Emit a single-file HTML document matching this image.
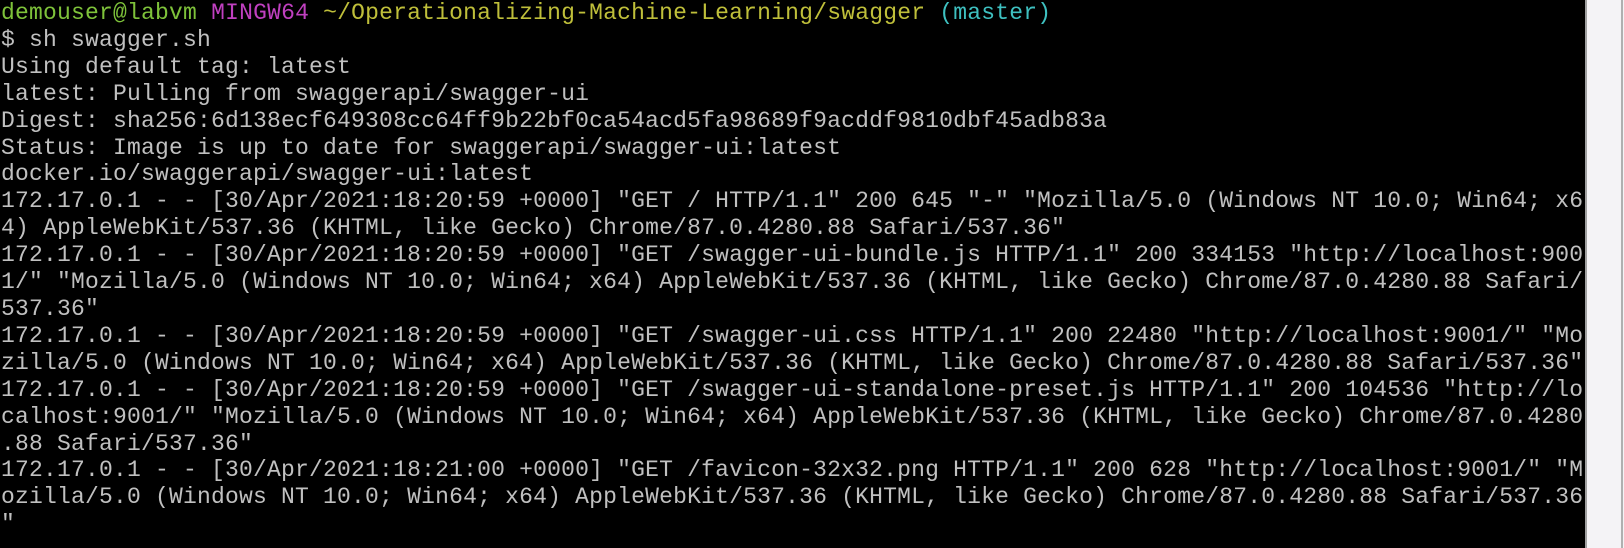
<!DOCTYPE html>
<html><head><meta charset="utf-8"><style>
html,body{margin:0;padding:0;width:1624px;height:548px;overflow:hidden;background:#f4f3f6}
#t{position:absolute;left:0;top:0;width:1585px;height:548px;background:#000}
#sb{position:absolute;left:1585px;top:0;width:2px;height:548px;background:#a0a0a0}
#sb2{position:absolute;left:1621px;top:0;width:2px;height:548px;background:#b0b0b0}
pre{margin:0;position:absolute;left:1px;top:0px;font-family:"Liberation Mono",monospace;font-size:23px;letter-spacing:0.2px;line-height:26.9px;color:#c0c0c0;white-space:pre}
.g{color:#7ec23a}.m{color:#c040c0}.y{color:#bfbf3a}.c{color:#3ec0c0}
</style></head><body>
<div id="t"></div><div id="sb"></div><div id="sb2"></div>
<pre><span class="g">demouser@labvm</span> <span class="m">MINGW64</span> <span class="y">~/Operationalizing-Machine-Learning/swagger</span> <span class="c">(master)</span>
$ sh swagger.sh
Using default tag: latest
latest: Pulling from swaggerapi/swagger-ui
Digest: sha256:6d138ecf649308cc64ff9b22bf0ca54acd5fa98689f9acddf9810dbf45adb83a
Status: Image is up to date for swaggerapi/swagger-ui:latest
docker.io/swaggerapi/swagger-ui:latest
172.17.0.1 - - [30/Apr/2021:18:20:59 +0000] "GET / HTTP/1.1" 200 645 "-" "Mozilla/5.0 (Windows NT 10.0; Win64; x6
4) AppleWebKit/537.36 (KHTML, like Gecko) Chrome/87.0.4280.88 Safari/537.36"
172.17.0.1 - - [30/Apr/2021:18:20:59 +0000] "GET /swagger-ui-bundle.js HTTP/1.1" 200 334153 "http://localhost:900
1/" "Mozilla/5.0 (Windows NT 10.0; Win64; x64) AppleWebKit/537.36 (KHTML, like Gecko) Chrome/87.0.4280.88 Safari/
537.36"
172.17.0.1 - - [30/Apr/2021:18:20:59 +0000] "GET /swagger-ui.css HTTP/1.1" 200 22480 "http://localhost:9001/" "Mo
zilla/5.0 (Windows NT 10.0; Win64; x64) AppleWebKit/537.36 (KHTML, like Gecko) Chrome/87.0.4280.88 Safari/537.36"
172.17.0.1 - - [30/Apr/2021:18:20:59 +0000] "GET /swagger-ui-standalone-preset.js HTTP/1.1" 200 104536 "http://lo
calhost:9001/" "Mozilla/5.0 (Windows NT 10.0; Win64; x64) AppleWebKit/537.36 (KHTML, like Gecko) Chrome/87.0.4280
.88 Safari/537.36"
172.17.0.1 - - [30/Apr/2021:18:21:00 +0000] "GET /favicon-32x32.png HTTP/1.1" 200 628 "http://localhost:9001/" "M
ozilla/5.0 (Windows NT 10.0; Win64; x64) AppleWebKit/537.36 (KHTML, like Gecko) Chrome/87.0.4280.88 Safari/537.36
"</pre>
</body></html>
